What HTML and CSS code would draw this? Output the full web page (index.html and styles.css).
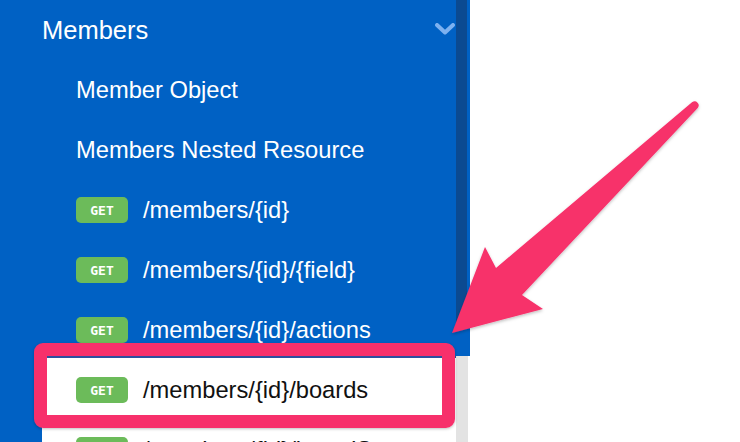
FILE: index.html
```html
<!DOCTYPE html>
<html lang="en">
<head>
<meta charset="utf-8">
<title>Members</title>
<link rel="stylesheet" href="styles.css">
</head>
<body>
<div class="page">
  <aside class="sidebar">
    <nav class="nav">
      <div class="group-head">
        <span>Members</span>
        <svg class="chevron" width="20" height="12" viewBox="0 0 20 12"><polyline points="2,2 10,9.5 18,2" fill="none" stroke="#7db1f0" stroke-width="4" stroke-linecap="round" stroke-linejoin="round"/></svg>
      </div>
      <div class="item">Member Object</div>
      <div class="item">Members Nested Resource</div>
      <div class="item"><span class="badge">GET</span><span class="path">/members/{id}</span></div>
      <div class="item"><span class="badge">GET</span><span class="path">/members/{id}/{field}</span></div>
      <div class="item"><span class="badge">GET</span><span class="path">/members/{id}/actions</span></div>
    </nav>
    <div class="lower">
      <div class="gutter"></div>
      <div class="panel">
        <div class="item dark"><span class="badge">GET</span><span class="path">/members/{id}/boards</span></div>
        <div class="item dark"><span class="badge">GET</span><span class="path">/members/{id}/boardStars</span></div>
      </div>
      <div class="track"></div>
    </div>
    <div class="thumb"></div>
  </aside>
  <div class="highlight"></div>
  <svg class="arrow" width="740" height="442" viewBox="0 0 740 442">
    <defs>
      <filter id="sh" x="-10%" y="-10%" width="120%" height="120%">
        <feDropShadow dx="0" dy="1.5" stdDeviation="1.5" flood-color="#000" flood-opacity="0.25"/>
      </filter>
    </defs>
    <path d="M452,333 L485,247 L496,268 L692.3,102.1 A4,4 0 0 1 697.7,107.9 L522,295 L543,309 Z" fill="#f7306b" filter="url(#sh)"/>
  </svg>
</div>
</body>
</html>
```
FILE: styles.css
```css
html, body {
  margin: 0;
  padding: 0;
  background: #ffffff;
}
.page {
  position: relative;
  width: 740px;
  height: 442px;
  overflow: hidden;
  font-family: "Liberation Sans", Arial, Helvetica, sans-serif;
}
.sidebar {
  position: relative;
  width: 470px;
  height: 442px;
  display: flex;
  flex-direction: column;
  overflow: hidden;
}
.nav {
  flex: none;
  height: 356px;
  overflow: hidden;
  background: #0061c4;
  color: #ffffff;
}
.group-head {
  height: 60px;
  display: flex;
  align-items: center;
  justify-content: space-between;
  padding: 0 15px 0 42px;
  font-size: 25.5px;
}
.chevron {
  display: block;
  margin-top: -3px;
}
.item {
  height: 60px;
  display: flex;
  align-items: center;
  padding-left: 76px;
  font-size: 23.7px;
  white-space: nowrap;
}
.badge {
  width: 52px;
  height: 26px;
  border-radius: 5px;
  background: #6cbb5a;
  color: #ffffff;
  font-family: "DejaVu Sans Mono", monospace;
  font-weight: bold;
  font-size: 13px;
  display: flex;
  align-items: center;
  justify-content: center;
  margin-right: 15px;
  flex: none;
}
.lower {
  flex: none;
  height: 86px;
  display: flex;
  overflow: hidden;
}
.gutter {
  width: 42px;
  background: #0061c4;
}
.panel {
  width: 414px;
  background: #ffffff;
  border-top: 2px solid #2d4f9e;
  padding-top: 2px;
  overflow: hidden;
}
.panel .item {
  padding-left: 34px;
  color: #111111;
}
.track {
  width: 12px;
  background: #e3e3e3;
}
.thumb {
  position: absolute;
  left: 456px;
  top: 0;
  width: 11px;
  height: 326px;
  background: #0b4a91;
  border-radius: 0 0 5px 5px;
}
.highlight {
  position: absolute;
  left: 34px;
  top: 343px;
  width: 421px;
  height: 85px;
  box-sizing: border-box;
  border: 13px solid #f7306b;
  border-radius: 9px;
  box-shadow: 0 1px 3px rgba(0, 0, 0, 0.25);
}
.arrow {
  position: absolute;
  left: 0;
  top: 0;
}
```
